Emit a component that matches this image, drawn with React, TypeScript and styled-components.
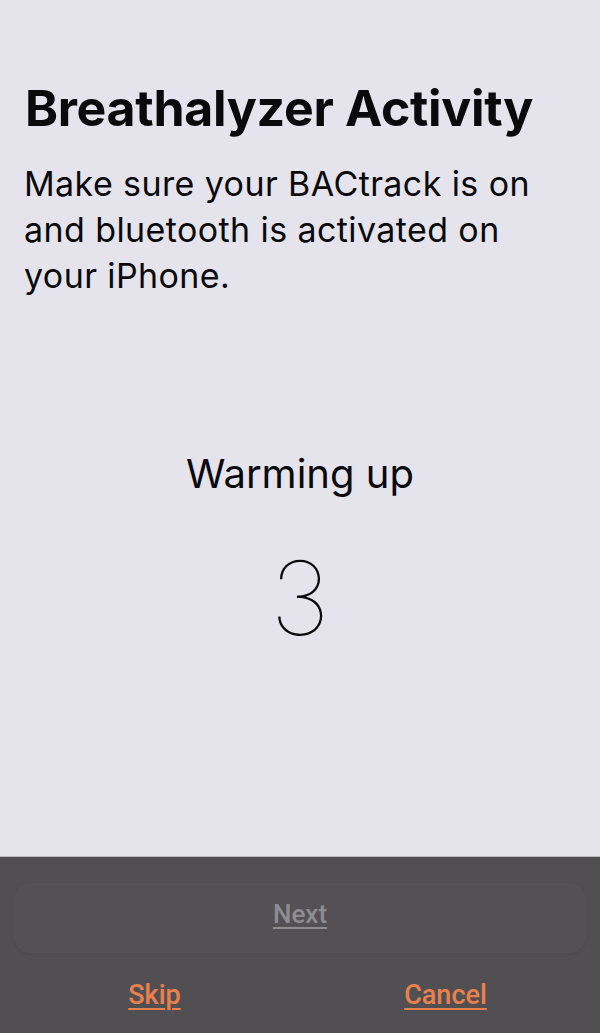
import React from "react";
import styled, { createGlobalStyle } from "styled-components";

const GlobalStyle = createGlobalStyle`
  html, body {
    margin: 0;
    padding: 0;
    background: #e5e3ec;
  }
  body {
    font-family: Inter, "Noto Sans", "Liberation Sans", sans-serif;
    -webkit-font-smoothing: antialiased;
  }
`;

const Screen = styled.div`
  width: 600px;
  height: 1033px;
  display: flex;
  flex-direction: column;
  background: #e5e3ec;
  color: #0a0a0c;
  overflow: hidden;
`;

const Content = styled.div`
  flex: 1;
  display: flex;
  flex-direction: column;
  padding: 78px 40px 0 25px;
`;

const Title = styled.h1`
  margin: 0;
  font-size: 50px;
  line-height: 60px;
  font-weight: 700;
  letter-spacing: -0.3px;
`;

const Intro = styled.p`
  margin: 23px 0 0 -1px;
  font-size: 34px;
  line-height: 46px;
  font-weight: 400;
  letter-spacing: 0.4px;
`;

const Status = styled.div`
  margin-top: 152px;
  display: flex;
  flex-direction: column;
  align-items: center;
  padding-left: 15px;
`;

const StatusLabel = styled.div`
  font-size: 40px;
  line-height: 46px;
  font-weight: 400;
`;

const Countdown = styled.div`
  margin-top: 50px;
  font-size: 102px;
  line-height: 102px;
  font-weight: 100;
`;

const Footer = styled.div`
  height: 177px;
  background: #514f52;
  border-top: 1px solid #bdbbc2;
  padding: 26px 14px 0;
  box-sizing: border-box;
  display: flex;
  flex-direction: column;
`;

const NextCard = styled.div`
  height: 70px;
  border-radius: 16px;
  background: #535154;
  box-shadow: 0 1px 3px rgba(0, 0, 0, 0.08);
  display: flex;
  align-items: center;
  justify-content: center;
  padding-bottom: 8px;
  box-sizing: border-box;
`;

const LinkText = styled.a<{ tone: "muted" | "accent" }>`
  font-family: Roboto, "Liberation Sans", sans-serif;
  font-size: ${({ tone }) => (tone === "muted" ? "26px" : "27px")};
  font-weight: 500;
  text-decoration: underline;
  text-underline-offset: 4px;
  text-decoration-thickness: 2px;
  color: ${({ tone }) => (tone === "muted" ? "#8e8d92" : "#e9814f")};
  cursor: pointer;
`;

const Actions = styled.div`
  flex: 1;
  display: grid;
  grid-template-columns: 1fr 1fr;
  align-items: center;
  margin: 0 -5px;
  padding-top: 3px;
`;

const ActionCell = styled.div`
  display: flex;
  justify-content: center;
`;

export default function App() {
  return (
    <Screen>
      <GlobalStyle />
      <Content>
        <Title>Breathalyzer Activity</Title>
        <Intro>
          Make sure your BACtrack is on and bluetooth is activated on your
          iPhone.
        </Intro>
        <Status>
          <StatusLabel>Warming up</StatusLabel>
          <Countdown>3</Countdown>
        </Status>
      </Content>
      <Footer>
        <NextCard>
          <LinkText tone="muted">Next</LinkText>
        </NextCard>
        <Actions>
          <ActionCell>
            <LinkText tone="accent">Skip</LinkText>
          </ActionCell>
          <ActionCell>
            <LinkText tone="accent">Cancel</LinkText>
          </ActionCell>
        </Actions>
      </Footer>
    </Screen>
  );
}
